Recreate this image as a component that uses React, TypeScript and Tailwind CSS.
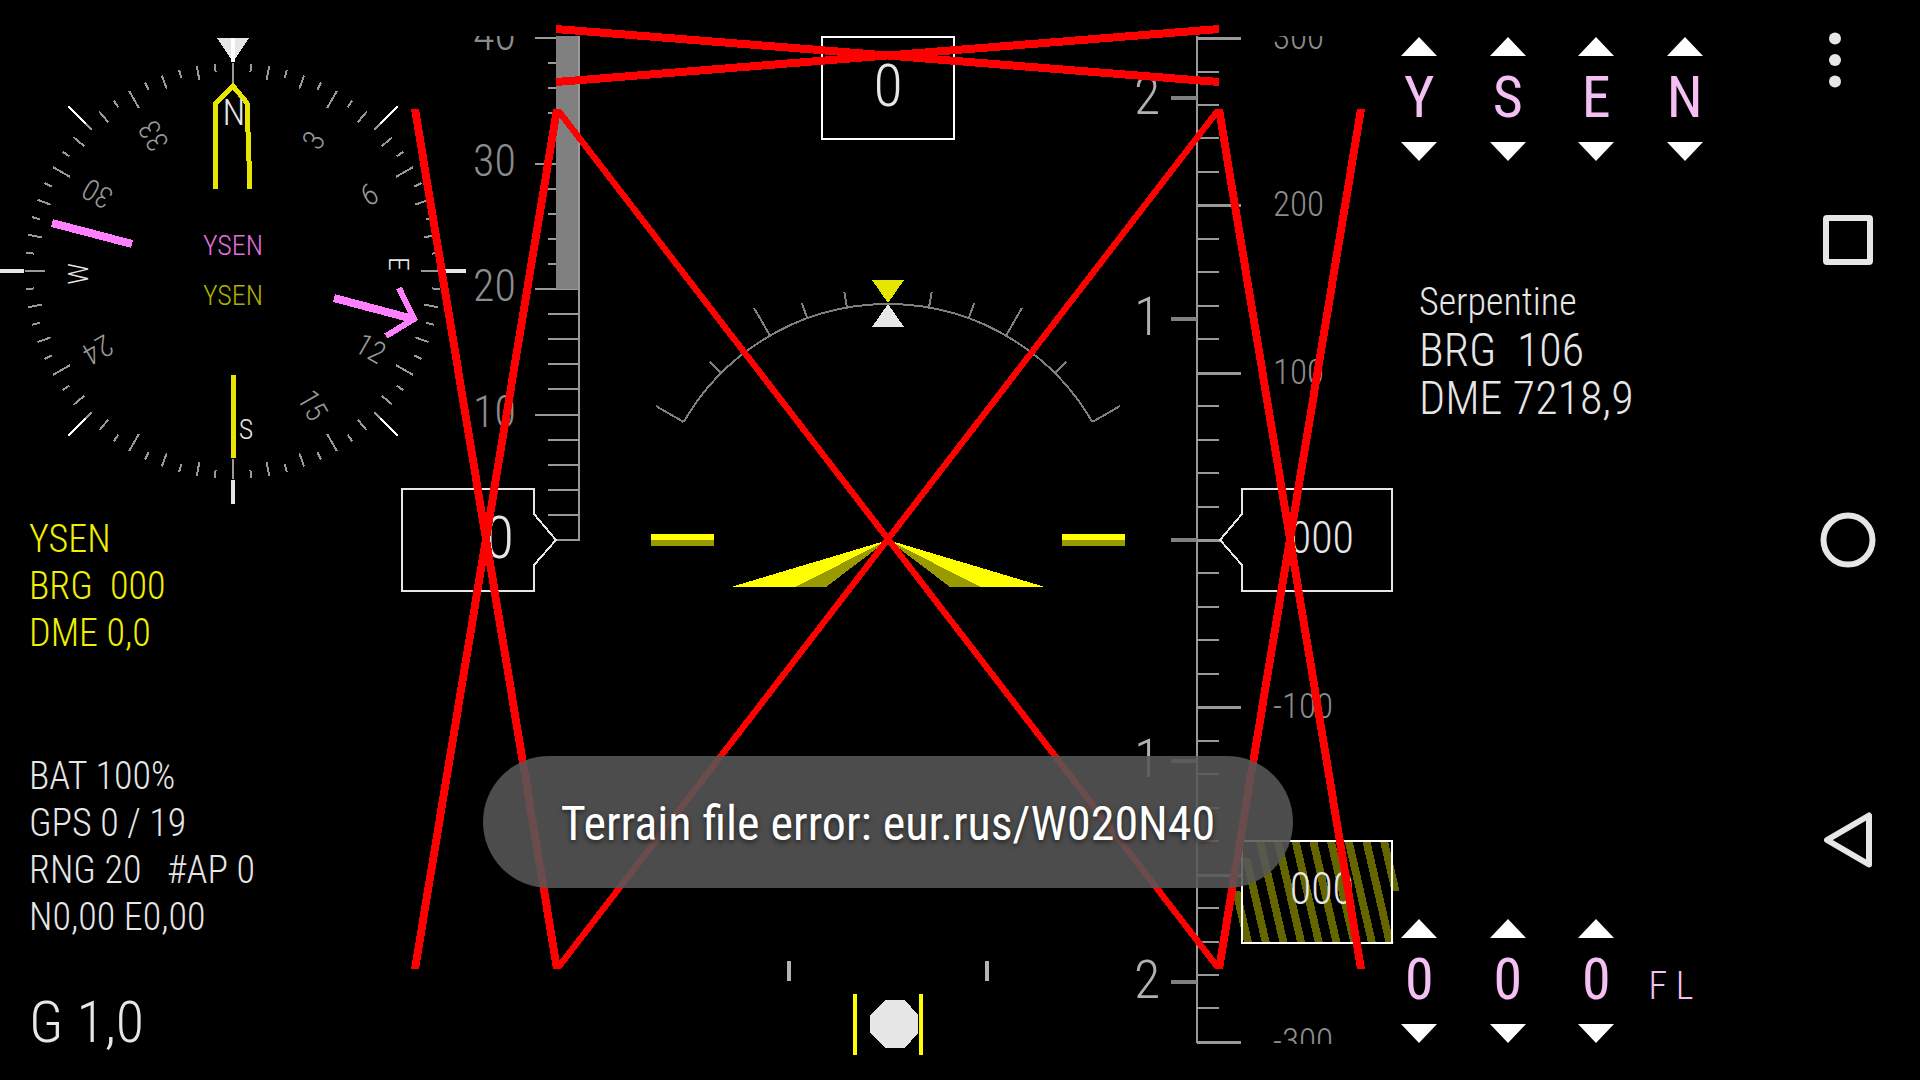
import React from "react";

const range = (from: number, to: number) => Array.from({ length: to - from + 1 }, (_, i) => from + i);

const polar = (cx: number, cy: number, r: number, deg: number): [number, number] => {
  const a = (deg * Math.PI) / 180;
  return [cx + r * Math.sin(a), cy - r * Math.cos(a)];
};

type RayProps = {
  cx: number;
  cy: number;
  deg: number;
  from: number;
  to: number;
  color: string;
  width?: number;
};

function Ray({ cx, cy, deg, from, to, color, width = 2 }: RayProps) {
  const [x1, y1] = polar(cx, cy, from, deg);
  const [x2, y2] = polar(cx, cy, to, deg);
  return <line x1={x1} y1={y1} x2={x2} y2={y2} stroke={color} strokeWidth={width} />;
}

/* ---------- Compass rose ---------- */

const CX = 233;
const CY = 271;

const roseLabels = [
  { text: "N", x: 234, y: 112, rot: 0, size: 37, cardinal: true },
  { text: "3", x: 313, y: 140, rot: -60, size: 30, cardinal: false },
  { text: "6", x: 369, y: 194, rot: -30, size: 30, cardinal: false },
  { text: "E", x: 399, y: 264, rot: 90, size: 28, cardinal: true },
  { text: "12", x: 371, y: 348, rot: 30, size: 30, cardinal: false },
  { text: "15", x: 313, y: 405, rot: 60, size: 30, cardinal: false },
  { text: "S", x: 246, y: 429, rot: 0, size: 28, cardinal: true },
  { text: "24", x: 98, y: 350, rot: 150, size: 30, cardinal: false },
  { text: "W", x: 78, y: 274, rot: -90, size: 28, cardinal: true },
  { text: "30", x: 97, y: 194, rot: 210, size: 30, cardinal: false },
  { text: "33", x: 153, y: 136, rot: 240, size: 30, cardinal: false },
];

function tickInner(deg: number) {
  if (deg % 30 === 0) return 188;
  if (deg % 10 === 0) return 194;
  return 200;
}

function Compass() {
  return (
    <svg viewBox="0 0 400 516" className="block w-full overflow-visible" role="img" aria-label="Compass rose">
      <g shapeRendering="crispEdges">
        {range(0, 71).map((i) => (
          <Ray key={i} cx={CX} cy={CY} deg={i * 5} from={tickInner(i * 5)} to={208} color="#999999" />
        ))}
        {[45, 135, 225, 315].map((d) => (
          <Ray key={d} cx={CX} cy={CY} deg={d} from={208} to={233} color="#ffffff" />
        ))}
        <polygon points="217,38 249,38 233,62" fill="#e6e6e6" />
        <Ray cx={CX} cy={CY} deg={0} from={209} to={233} color="#ffffff" width={4} />
        <Ray cx={CX} cy={CY} deg={90} from={209} to={233} color="#e6e6e6" width={4} />
        <Ray cx={CX} cy={CY} deg={180} from={209} to={233} color="#e6e6e6" width={4} />
        <Ray cx={CX} cy={CY} deg={270} from={209} to={233} color="#e6e6e6" width={4} />
        <polyline points="215.5,189 215.5,104 233,86 247,103 250,189" fill="none" stroke="#e6e600" strokeWidth="5" />
        <line x1="233.5" y1="375" x2="233.5" y2="458" stroke="#e6e600" strokeWidth="5" />
        <g stroke="#ff80ff">
          <line x1="52" y1="223" x2="132" y2="244" strokeWidth="8" />
          <line x1="334" y1="298" x2="413" y2="319" strokeWidth="8" />
          <polyline points="399,288 414,319 386,336" fill="none" strokeWidth="6" />
        </g>
      </g>
      <g textAnchor="middle" className="font-light">
        {roseLabels.map((l) => (
          <text
            key={l.text}
            transform={`translate(${l.x} ${l.y}) rotate(${l.rot})`}
            y={Math.round(l.size * 0.355)}
            fontSize={l.size}
            fill={l.cardinal ? "#e6e6e6" : "#999999"}
          >
            {l.text}
          </text>
        ))}
        <text x={CX} y="255" fontSize="28" fill="#e070e0">YSEN</text>
        <text x={CX} y="305" fontSize="28" fill="#b0b000">YSEN</text>
      </g>
    </svg>
  );
}

/* ---------- Primary flight display ---------- */

const bankTicks = [
  { deg: 10, to: 252 },
  { deg: 20, to: 252 },
  { deg: 30, to: 268 },
  { deg: 45, to: 252 },
  { deg: 60, to: 268 },
];

function Horizon() {
  const [ax, ay] = polar(888, 540, 236, -60);
  const [bx, by] = polar(888, 540, 236, 60);
  return (
    <g>
      <path d={`M${ax} ${ay}A236 236 0 0 1 ${bx} ${by}`} fill="none" stroke="#808080" strokeWidth="2" />
      {bankTicks.map((t) => (
        <g key={t.deg}>
          <Ray cx={888} cy={540} deg={t.deg} from={236} to={t.to} color="#808080" />
          <Ray cx={888} cy={540} deg={-t.deg} from={236} to={t.to} color="#808080" />
        </g>
      ))}
      <polygon points="872,280 904,280 888,303" fill="#e6e600" />
      <polygon points="888,304 904,327 872,327" fill="#e6e6e6" />
      <rect x="651" y="534" width="63" height="6" fill="#ffff00" />
      <rect x="651" y="540" width="63" height="6" fill="#999900" />
      <rect x="1062" y="534" width="63" height="6" fill="#ffff00" />
      <rect x="1062" y="540" width="63" height="6" fill="#999900" />
      <polygon points="888,540 731,587 795,587" fill="#ffff00" />
      <polygon points="888,540 795,587 826,587" fill="#999900" />
      <polygon points="888,540 1045,587 981,587" fill="#ffff00" />
      <polygon points="888,540 981,587 950,587" fill="#999900" />
    </g>
  );
}

function SlipIndicator() {
  return (
    <g>
      <rect x="787" y="961" width="4" height="20" fill="#b3b3b3" />
      <rect x="985" y="961" width="4" height="20" fill="#b3b3b3" />
      <rect x="853" y="994" width="4" height="61" fill="#ffff00" />
      <rect x="919" y="994" width="4" height="61" fill="#ffff00" />
      <polygon points="885,1000 905,1000 918,1015 918,1033 905,1048 885,1048 870,1033 870,1015" fill="#e6e6e6" />
    </g>
  );
}

function SpeedTape() {
  const y = (kt: number) => Math.round(540 - kt * 12.55);
  return (
    <g>
      <g shapeRendering="crispEdges" fill="#999999">
        {range(1, 20).map((i) => {
          const major = i % 5 === 0;
          return <rect key={i} x={major ? 535 : 548} y={y(i * 2) - 1} width={major ? 44 : 31} height="2" />;
        })}
        <rect x="556" y="539" width="23" height="2" />
        <rect x="556" y="36" width="23" height="253" fill="#808080" />
        <rect x="578" y="36" width="2" height="505" />
      </g>
      <g clipPath="url(#tape)" fill="#8c8c8c" fontSize="44" className="font-light">
        {[10, 20, 30, 40].map((v) => (
          <text key={v} x="473" y={y(v) + 12}>{v}</text>
        ))}
      </g>
      <path d="M402 489H534V514L556 540L534 565V591H402Z" fill="#000000" stroke="#e6e6e6" strokeWidth="2" shapeRendering="crispEdges" />
      <text x="514" y="558" textAnchor="end" fontSize="60" fill="#e6e6e6" className="font-light">0</text>
    </g>
  );
}

function AltitudeTape() {
  const y = (ft: number) => Math.round(540 - ft * 1.673);
  return (
    <g>
      <g shapeRendering="crispEdges" fill="#999999">
        {range(-15, 15).map((i) => {
          const major = i % 5 === 0;
          return (
            <rect key={i} x="1197" y={y(i * 20) - 1} width={major ? (i === 0 ? 23 : 44) : 22} height={major ? 3 : 2} />
          );
        })}
        <rect x="1196" y="36" width="2" height="1007" />
        {[98, 319, 540, 761, 982].map((v) => (
          <rect key={v} x="1171" y={v - 2} width="26" height="4" fill="#808080" />
        ))}
      </g>
      <g fill="#b0b0b0" fontSize="54" className="font-light">
        <text x="1134" y="114">2</text>
        <text x="1134" y="335">1</text>
        <text x="1134" y="777">1</text>
        <text x="1134" y="998">2</text>
      </g>
      <g clipPath="url(#tape)" fill="#8c8c8c" fontSize="35" className="font-light">
        {[300, 200, 100, -100, -300].map((v) => (
          <text key={v} x="1273" y={y(v) + 11}>{v}</text>
        ))}
      </g>
      <path d="M1242 489H1392V591H1242V565L1220 540L1242 514Z" fill="#000000" stroke="#e6e6e6" strokeWidth="2" shapeRendering="crispEdges" />
      <text x="1354" y="553" textAnchor="end" fontSize="44" fill="#e6e6e6" className="font-light">000</text>
    </g>
  );
}

/* Ground elevation readout: slanted stripes that wrap at mid height */
function GroundBox() {
  const stripe = (k: number, y1: number, y2: number) => {
    const x = 1380 - k * 17.7;
    const xa = x + (y1 - 841) * 0.23;
    const xb = x + (y2 - 841) * 0.23;
    return <polygon key={k} points={`${xa},${y1} ${xa + 8},${y1} ${xb + 8},${y2} ${xb},${y2}`} />;
  };
  return (
    <g>
      <rect x="1242" y="841" width="150" height="102" fill="#000000" />
      <g fill="#666600" shapeRendering="crispEdges">
        {stripe(0, 841, 891)}
        {range(1, 7).map((k) => stripe(k, 841, 943))}
        {stripe(8, 858, 943)}
        {stripe(9, 891, 943)}
      </g>
      <rect x="1242" y="841" width="150" height="102" fill="none" stroke="#ffffff" strokeWidth="2" shapeRendering="crispEdges" />
      <text x="1354" y="904" textAnchor="end" fontSize="44" fill="#e6e6e6" className="font-light">000</text>
    </g>
  );
}

/* Failure flags: each cross fills its instrument with two strokes */
function FailureFlags() {
  const steep = (x1: number, x2: number) => (
    <polygon points={`${x1 - 4},109 ${x1 + 4},109 ${x2 + 4},969 ${x2 - 4},969`} />
  );
  return (
    <g fill="#ff0000" shapeRendering="crispEdges">
      {steep(415, 557)}
      {steep(557, 415)}
      {steep(557, 1219)}
      {steep(1219, 557)}
      {steep(1219, 1361)}
      {steep(1361, 1219)}
      <polygon points="556,25 1219,78 1219,86 556,33" />
      <polygon points="556,78 1219,25 1219,33 556,86" />
    </g>
  );
}

function FlightDisplay() {
  return (
    <svg
      viewBox="400 0 975 1080"
      preserveAspectRatio="xMinYMin meet"
      className="block w-full overflow-visible"
      role="img"
      aria-label="Primary flight display"
    >
      <defs>
        <clipPath id="tape">
          <rect x="400" y="36" width="1000" height="1008" />
        </clipPath>
      </defs>
      <g shapeRendering="crispEdges">
        <Horizon />
        <SlipIndicator />
      </g>
      <SpeedTape />
      <AltitudeTape />
      <GroundBox />
      <rect x="822" y="37" width="132" height="102" fill="#000000" stroke="#ffffff" strokeWidth="2" shapeRendering="crispEdges" />
      <text x="888" y="106" textAnchor="middle" fontSize="60" fill="#e6e6e6" className="font-light">0</text>
      <FailureFlags />
    </svg>
  );
}

/* ---------- Side panels ---------- */

function Picker({ value, name }: { value: string; name: string }) {
  return (
    <div className="flex flex-col items-center">
      <button type="button" aria-label={`${name} up`} className="block">
        <svg width="36" height="19" viewBox="0 0 36 19" className="block">
          <path d="M18 0L36 19H0Z" fill="#ffffff" />
        </svg>
      </button>
      <span className="h-[86px] text-[58px] leading-[82px] font-normal text-[#f4c0f4]">{value}</span>
      <button type="button" aria-label={`${name} down`} className="block">
        <svg width="36" height="19" viewBox="0 0 36 19" className="block">
          <path d="M0 0H36L18 19Z" fill="#ffffff" />
        </svg>
      </button>
    </div>
  );
}

function NavBar() {
  return (
    <nav className="flex w-[144px] shrink-0 flex-col items-stretch pb-[90px]">
      <button type="button" aria-label="More options" className="flex h-[90px] shrink-0 items-center pt-[30px] pl-[52px]">
        <svg width="14" height="56" viewBox="0 0 14 56" fill="#e6e6e6">
          <circle cx="7" cy="6.5" r="6" />
          <circle cx="7" cy="28" r="6" />
          <circle cx="7" cy="49.5" r="6" />
        </svg>
      </button>
      <button type="button" aria-label="Recent apps" className="flex flex-1 items-center justify-center">
        <svg width="56" height="56" viewBox="0 0 56 56">
          <rect x="6" y="6" width="44" height="44" rx="1" fill="none" stroke="#e6e6e6" strokeWidth="6" strokeLinejoin="round" />
        </svg>
      </button>
      <button type="button" aria-label="Home" className="flex flex-1 items-center justify-center">
        <svg width="56" height="56" viewBox="0 0 56 56">
          <circle cx="28" cy="28" r="24.5" fill="none" stroke="#e6e6e6" strokeWidth="6" />
        </svg>
      </button>
      <button type="button" aria-label="Back" className="flex flex-1 items-center justify-center">
        <svg width="56" height="56" viewBox="0 0 56 56">
          <path d="M49 3.5V52.5L7 28Z" fill="none" stroke="#e6e6e6" strokeWidth="6" strokeLinejoin="round" />
        </svg>
      </button>
    </nav>
  );
}

export default function App() {
  return (
    <div className="flex min-h-screen bg-black font-['Roboto_Condensed','Roboto',sans-serif] text-[#e6e6e6]">
      <main className="relative flex flex-1">
        <aside className="flex w-[400px] shrink-0 flex-col pb-[26px]">
          <Compass />
          <div className="pl-[29px] text-[38px] leading-[47px] font-light whitespace-pre text-[#f0f000]">
            <p>YSEN</p>
            <p>BRG  000</p>
            <p>DME 0,0</p>
          </div>
          <div className="mt-auto pl-[29px] text-[38px] leading-[47px] font-light whitespace-pre">
            <p>BAT 100%</p>
            <p>GPS 0 / 19</p>
            <p>RNG 20   #AP 0</p>
            <p>N0,00 E0,00</p>
          </div>
          <p className="mt-[49px] pl-[29px] text-[58px] leading-[64px] font-light">G 1,0</p>
        </aside>

        <section className="min-w-0 flex-1">
          <FlightDisplay />
        </section>

        <aside className="flex w-[401px] shrink-0 flex-col py-[37px]">
          <div className="grid w-[354px] grid-cols-4">
            {["Y", "S", "E", "N"].map((c, i) => (
              <Picker key={c} value={c} name={`Waypoint letter ${i + 1}`} />
            ))}
          </div>
          <div className="mt-[117px] pl-[44px] leading-[48px] font-light whitespace-pre">
            <p className="text-[38px]">Serpentine</p>
            <p className="text-[46px]">BRG  106</p>
            <p className="text-[46px]">DME 7218,9</p>
          </div>
          <div className="mt-auto grid w-[354px] grid-cols-4">
            {["0", "0", "0"].map((c, i) => (
              <Picker key={i} value={c} name={`Flight level digit ${i + 1}`} />
            ))}
            <span className="pt-[24px] pl-[8px] text-[38px] leading-[86px] font-light text-[#f4c0f4]">F L</span>
          </div>
        </aside>

        <div role="status" className="pointer-events-none absolute inset-x-0 bottom-[192px] flex justify-center">
          <p className="rounded-full bg-[#575757]/88 px-[78px] pt-[40px] pb-[36px] text-[48px] leading-[56px] text-white [text-shadow:0_2px_5px_rgba(0,0,0,0.6)]">
            Terrain file error: eur.rus/W020N40
          </p>
        </div>
      </main>
      <NavBar />
    </div>
  );
}
